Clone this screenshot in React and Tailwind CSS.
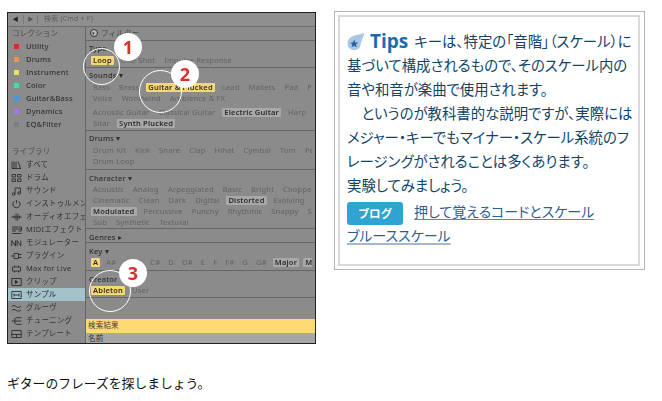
import React from 'react';

const collections = [
  ['Utility', 'bg-[#e0282e]'],
  ['Drums', 'bg-[#e8964a]'],
  ['Instrument', 'bg-[#e8e25a]'],
  ['Color', 'bg-[#3fe0a0]'],
  ['Guitar&Bass', 'bg-[#3a9cf0]'],
  ['Dynamics', 'bg-[#a877ee]'],
  ['EQ&Filter', 'bg-[#7d7d7d]'],
];

// ブラウザの小さいアイコン
const icons = {
  all: <path d="M1 1.5v7M3 1.5v7M5 1.5v7M7 1.5l2.5 7M1 8.5h9" />,
  drums: <path d="M1 1.5h3.5v2.5h-3.5zM6.5 1.5h3.5v2.5h-3.5zM1 6h3.5v2.5h-3.5zM6.5 6h3.5v2.5h-3.5z" />,
  sound: <path d="M4 8V2h5.5v5M4 8a1.4 1.2 0 1 1-2.8 0a1.4 1.2 0 1 1 2.8 0M9.5 7a1.4 1.2 0 1 1-2.8 0a1.4 1.2 0 1 1 2.8 0" />,
  instrument: <path d="M3.4 2.2a3.6 3.6 0 1 0 4.2 0M5.5 1v3.4" />,
  audio: <path d="M0.5 5h10M3 3.5v3M5 1.5v7M6.8 1.5v7M8.6 3.5v3" />,
  midi: <path d="M1 2h6M1 4h9M1 6h4M1 8.5h9.5M7.5 2h3v4h-3" />,
  mod: <path d="M0.8 8V2.5L4.5 8V2.5M6 8V2.5L9.8 8V2.5" />,
  plug: <path d="M0.5 5h2.5M3 2.5h4.5v5h-4.5zM7.5 3.5h3M7.5 6.5h3" />,
  max: <path d="M1.5 3h8v4h-8zM3.5 1.5V3M7.5 1.5V3M3.5 7v1.5M7.5 7v1.5" />,
  clip: (
    <>
      <path d="M0.8 1.5h9.4v7h-9.4z" />
      <path d="M4.3 3.5l2.5 1.5l-2.5 1.5z" fill="currentColor" />
    </>
  ),
  sample: <path d="M0.8 1.5h9.4v7h-9.4zM3 3.5v3M8 3.5v3M3 5h5" />,
  groove: <path d="M0.8 3.6c1.5-1.6 3-1 4.5 0s3 1.2 4.7-.4M0.8 7.4c1.5-1.6 3-1 4.5 0s3 1.2 4.7-.4" />,
  tuning: <path d="M0.8 5h3M3.8 2.8l2-1.2h4.5M3.8 5h6.5M3.8 7.2l2 1.2h4.5M3.8 2.8v4.4" />,
  template: <path d="M0.8 1.5h9.4v7h-9.4zM0.8 5.5h9.4M5.5 5.5v3" />,
};

const library = [
  ['すべて', 'all'],
  ['ドラム', 'drums'],
  ['サウンド', 'sound'],
  ['インストゥルメント', 'instrument'],
  ['オーディオエフェクト', 'audio'],
  ['MIDIエフェクト', 'midi'],
  ['モジュレーター', 'mod'],
  ['プラグイン', 'plug'],
  ['Max for Live', 'max'],
  ['クリップ', 'clip'],
  ['サンプル', 'sample'],
  ['グルーヴ', 'groove'],
  ['チューニング', 'tuning'],
  ['テンプレート', 'template'],
];

const Tag = ({ children, on, sel }) => (
  <span
    className={`shrink-0 px-[2px] leading-[9px] rounded-[1px] ${
      on
        ? 'bg-[#f3d873] text-[#33301f] font-semibold'
        : sel
          ? 'bg-[#a8a8a8] text-[#2c2c2c] font-semibold'
          : 'text-[#626262]'
    }`}
  >
    {children}
  </span>
);

// 1行分のタグ
const Row = ({ items, gap = 'gap-[5px]' }) => (
  <div className={`flex ${gap} h-[11px] items-center whitespace-nowrap overflow-hidden`}>
    {items.map((it) => {
      const [label, state] = Array.isArray(it) ? it : [it];
      return (
        <Tag key={label} on={state === 'on'} sel={state === 'sel'}>
          {label}
        </Tag>
      );
    })}
  </div>
);

const Section = ({ title, h, children }) => (
  <div className={`border-b border-[#666] px-[3px] pt-[2px] ${h}`}>
    <div className="h-[12px] flex items-center text-[#2f2f2f] font-medium leading-none">{title}</div>
    <div className="pl-[2px]">{children}</div>
  </div>
);

const Callout = ({ n, cls, ring }) => (
  <>
    <div className={`absolute rounded-full border-[1.5px] border-white ${ring}`}></div>
    <div className={`absolute w-[28px] h-[28px] rounded-full bg-white flex items-center justify-center text-[#d9302c] text-[18px] font-bold leading-none ${cls}`}>
      {n}
    </div>
  </>
);

const AbletonMock = () => (
  <div className="relative mt-[1px] w-[309px] h-[332px] border border-[#222] bg-[#8b8b8b] overflow-hidden text-[7.5px] tracking-[0.2px] shrink-0" style={{ fontFamily: '"Noto Sans", "Noto Sans CJK JP", sans-serif' }}>
    <div className="blur-[0.35px]">
      {/* 検索バー */}
      <div className="h-[14px] flex items-center border-b border-[#6e6e6e] text-[#5f5f5f] bg-[#8f8f8f]">
        <span className="w-[15px] text-center text-[6px] text-[#222]">◀</span>
        <span className="w-[15px] text-center text-[6px] text-[#555] border-l border-r border-[#777]">▶</span>
        <span className="ml-[6px] text-[7px]">検索 (Cmd + F)</span>
      </div>
      <div className="flex h-[316px]">
        {/* サイドバー */}
        <div className="w-[78px] border-r border-[#666] pl-[4px] text-[#333] shrink-0">
          <div className="h-[13px] flex items-center text-[#4a4a4a]">コレクション</div>
          {collections.map(([name, color]) => (
            <div key={name} className="h-[13px] flex items-center gap-[7px] pl-[2px] font-medium">
              <span className={`w-[5px] h-[5px] ${color}`}></span>
              <span className="whitespace-nowrap">{name}</span>
            </div>
          ))}
          <div className="h-[13px] mt-[14px] flex items-center text-[#4a4a4a]">ライブラリ</div>
          {library.map(([name, icon]) => (
            <div
              key={name}
              className={`h-[13px] -ml-[4px] pl-[3px] flex items-center gap-[4px] whitespace-nowrap overflow-hidden ${name === 'サンプル' ? 'bg-[#a4c2ca] text-[#222]' : ''}`}
            >
              <svg viewBox="0 0 11 10" className="w-[11px] h-[10px] shrink-0 text-[#2c2c2c]" fill="none" stroke="currentColor" strokeWidth="0.9">
                {icons[icon]}
              </svg>
              <span>{name}</span>
            </div>
          ))}
        </div>

        {/* フィルター */}
        <div className="flex-1 min-w-0 flex flex-col">
          <div className="h-[14px] border-b border-[#666] flex items-center pl-[4px] gap-[3px] text-[#4a4a4a]">
            <span className="w-[8px] h-[8px] rounded-full bg-[#bbb] border border-[#333] flex items-center justify-center text-[5px] leading-none text-[#222]">▾</span>
            フィルター
          </div>
          <Section title="Type" h="h-[27px]">
            <Row items={[['Loop', 'on'], 'One Shot', 'Impulse Response']} />
          </Section>
          <Section title="Sounds ▾" h="h-[63px]">
            <Row items={['Bass', 'Brass', ['Guitar & Plucked', 'on'], 'Lead', 'Mallets', 'Pad', 'Piano']} />
            <Row items={['Voice', 'Woodwind', 'Ambience & FX']} />
            <div className="h-[3px]"></div>
            <Row items={['Acoustic Guitar', 'Classical Guitar', ['Electric Guitar', 'sel'], 'Harp']} />
            <Row items={['Sitar', ['Synth Plucked', 'sel']]} />
          </Section>
          <Section title="Drums ▾" h="h-[40px]">
            <Row items={['Drum Kit', 'Kick', 'Snare', 'Clap', 'Hihat', 'Cymbal', 'Tom', 'Perc']} />
            <Row items={['Drum Loop']} />
          </Section>
          <Section title="Character ▾" h="h-[59px]">
            <Row items={['Acoustic', 'Analog', 'Arpeggiated', 'Basic', 'Bright', 'Chopped']} />
            <Row items={['Cinematic', 'Clean', 'Dark', 'Digital', ['Distorted', 'sel'], 'Evolving', 'Lo-Fi']} />
            <Row items={[['Modulated', 'sel'], 'Percussive', 'Punchy', 'Rhythmic', 'Snappy', 'Soft']} />
            <Row items={['Sub', 'Synthetic', 'Textural']} />
          </Section>
          <Section title="Genres ▸" h="h-[14px]" />
          <Section title="Key ▾" h="h-[28px]">
            <Row gap="gap-[4px]" items={[['A', 'on'], 'A#', 'B', 'C', 'C#', 'D', 'D#', 'E', 'F', 'F#', 'G', 'G#', ['Major', 'sel'], ['Minor', 'sel']]} />
          </Section>
          <Section title="Creator" h="h-[27px]">
            <Row items={[['Ableton', 'on'], 'User']} />
          </Section>
          <div className="h-[21px]"></div>
          <div className="h-[14px] bg-[#ffd973] pl-[2px] flex items-center text-[#4a4530]">検索結果</div>
          <div className="flex-1 pl-[2px] bg-[#a6a6a6] text-[#333] leading-[10px]">名前</div>
        </div>
      </div>
    </div>

    <Callout n="1" cls="left-[106px] top-[20px]" ring="left-[75px] top-[35px] w-[37px] h-[37px]" />
    <Callout n="2" cls="left-[163px] top-[47px]" ring="left-[131px] top-[57px] w-[43px] h-[43px]" />
    <Callout n="3" cls="left-[111px] top-[246px]" ring="left-[81px] top-[257px] w-[42px] h-[42px]" />
  </div>
);

const TipsIcon = () => (
  <svg viewBox="0 0 18 18" className="w-[18px] h-[17px] shrink-0">
    <path d="M18 0 C14 1 10 2 7 3 C3 4 0 7 0 11 C0 15 3 18 7 18 C11 18 14 15 14 11 C15 8 17 4 18 0 Z" fill="#a9c6e2" />
    <polygon points="7,7 8.2,10 11.2,10.2 8.9,12.1 9.7,15 7,13.4 4.3,15 5.1,12.1 2.8,10.2 5.8,10" fill="#1d5fa8" />
  </svg>
);

const TipsBox = () => (
  <div className="w-[311px] h-[259px] border border-[#b5b5b5] pl-[3px] pt-[3px] pb-[3px] pr-[4px] shrink-0">
    <div className="h-full border-2 border-[#d9d9d9] pl-[7px] pt-[12px] text-[14.4px] leading-[24px] text-[#0f4468] whitespace-nowrap" style={{ fontFamily: '"Noto Sans CJK JP", "Noto Sans", sans-serif', fontFeatureSettings: '"palt"' }}>
      <div className="flex items-center h-[24px]">
        <TipsIcon />
        <span className="ml-[5px] mr-[6px] text-[19px] font-bold text-[#1a6cb0]" style={{ fontFamily: '"Open Sans", sans-serif' }}>Tips</span>
        キーは、特定の「音階」（スケール）に
      </div>
      <div>基づいて構成されるもので、そのスケール内の</div>
      <div>音や和音が楽曲で使用されます。</div>
      <div>　というのが教科書的な説明ですが、実際には</div>
      <div>メジャー・キーでもマイナー・スケール系統のフ</div>
      <div>レージングがされることは多くあります。</div>
      <div>実験してみましょう。</div>
      <div className="flex items-center mt-[2px] h-[24px] text-[14px]">
        <span className="w-[56px] h-[23px] mt-[4px] rounded-[3px] bg-[#2fa3d2] text-white text-[11.5px] font-bold flex items-center justify-center mr-[11px]">ブログ</span>
        <a className="text-[#2a5f94] underline underline-offset-2 decoration-[#5f86ad]">押して覚えるコードとスケール</a>
      </div>
      <div className="text-[14px]"><a className="text-[#2a5f94] underline underline-offset-2 decoration-2 decoration-[#a3b8d0]">ブルーススケール</a></div>
    </div>
  </div>
);

export default function App() {
  return (
    <div className="w-[662px] h-[401px] bg-white overflow-hidden pl-[7px] pt-[11px]">
      <div className="flex gap-[18px] items-start">
        <AbletonMock />
        <TipsBox />
      </div>
      <p className="mt-[30px] text-[12.8px] leading-[18px] text-[#111]" style={{ fontFamily: '"Noto Sans CJK JP", sans-serif' }}>
        ギターのフレーズを探しましょう。
      </p>
    </div>
  );
}
